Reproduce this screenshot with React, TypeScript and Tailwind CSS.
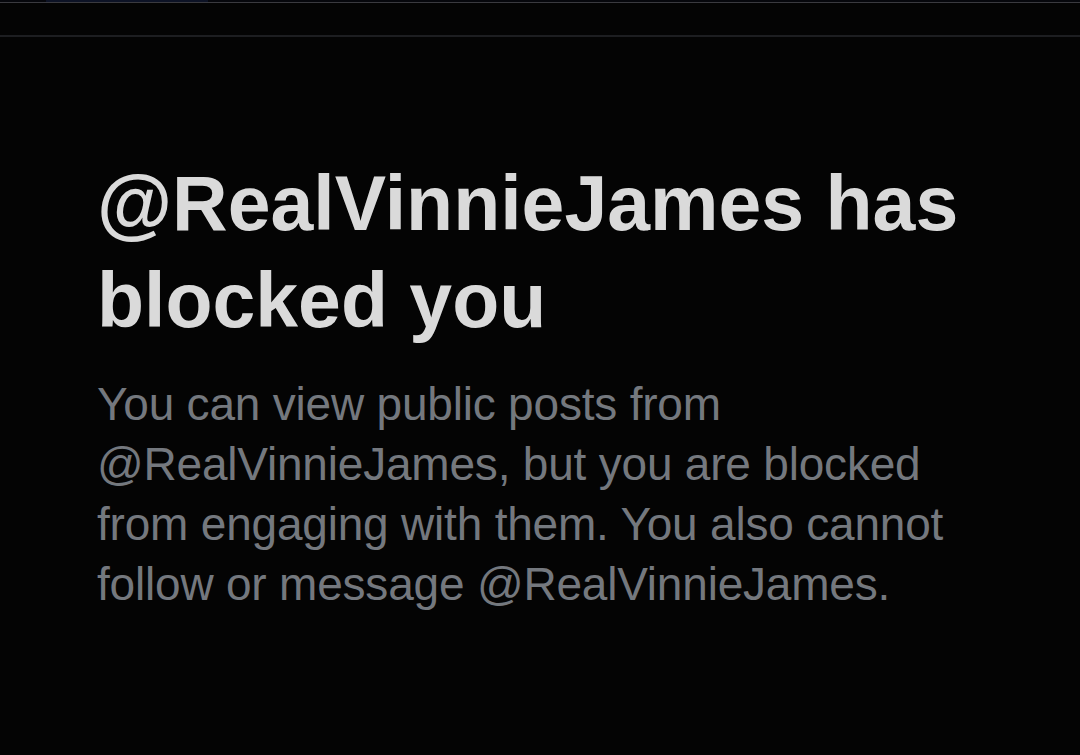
export default function App() {
  return (
    <div className="flex h-[755px] w-[1080px] flex-col overflow-hidden bg-[#040404]">
      {/* top chrome strip */}
      <div className="relative h-[2px] bg-[#06070c]">
        <div className="absolute left-[46px] top-0 h-[2px] w-[162px] bg-[#0d1326]" />
      </div>
      <div className="h-px bg-[#3a3a3f]" />
      <div className="h-[32px]" />
      <div className="h-[2px] bg-[#1d1e21]" />

      <main className="pl-[97px] pt-[118px]">
        <h1 className="font-['Liberation_Sans',Arial,sans-serif] text-[77px] font-bold leading-[97px] text-[#dadada]">
          <span className="block whitespace-nowrap">@RealVinnieJames has</span>
          <span className="block whitespace-nowrap">blocked you</span>
        </h1>
        <p className="mt-[25px] font-['Liberation_Sans',Arial,sans-serif] text-[46px] leading-[60px] tracking-[-0.2px] text-[#74787e]">
          <span className="block whitespace-nowrap">You can view public posts from</span>
          <span className="block whitespace-nowrap">@RealVinnieJames, but you are blocked</span>
          <span className="block whitespace-nowrap">from engaging with them. You also cannot</span>
          <span className="block whitespace-nowrap">follow or message @RealVinnieJames.</span>
        </p>
      </main>
    </div>
  );
}
